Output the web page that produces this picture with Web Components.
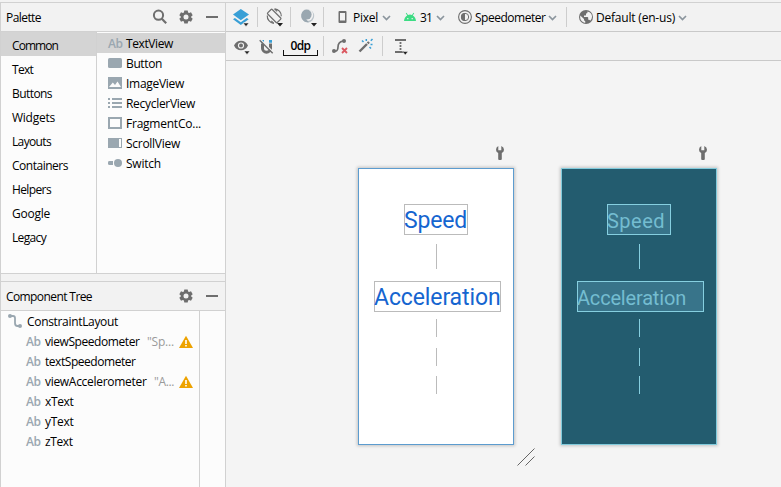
<!DOCTYPE html>
<html lang="en">
<head>
<meta charset="utf-8">
<title>Layout Editor</title>
<style>
html, body { margin: 0; height: 100%; overflow: hidden; }
body { font: 12px/20px "Open Sans", "Noto Sans", sans-serif; color: #000; }
</style>
</head>
<body>
<layout-editor></layout-editor>
<script>
const ICONS = {
  search: [16,16,'<circle cx="6.5" cy="6.2" r="4.6" fill="none" stroke="#6e6e6e" stroke-width="2"/><path d="M9.8 9.8 14.2 14.2" stroke="#6e6e6e" stroke-width="2.2"/>'],
  gear: [16,16,'<path fill="#6e6e6e" fill-rule="evenodd" d="M6.3 1.5h3.4l.4 2 1 .6 1.9-.8 1.7 3-1.5 1.2v1l1.5 1.2-1.7 3-1.9-.7-1 .6-.4 2H6.3l-.4-2-1-.6-1.9.7-1.7-3 1.5-1.2v-1L1.3 6.3l1.7-3 1.9.8 1-.6zM8 5.5a2.5 2.5 0 1 0 0 5 2.5 2.5 0 0 0 0-5z"/>'],
  minus: [12,16,'<path fill="#6e6e6e" d="M0 7h12v2H0z"/>'],
  button: [14,14,'<rect y="2" width="14" height="10" rx="1.6" fill="#9aa7b0"/>'],
  image: [14,14,'<path fill="#9aa7b0" fill-rule="evenodd" d="M0 1h14v12H0zM1 11h12L9.5 5.5 7 9 4.8 6.5z"/>'],
  list: [14,14,'<path fill="#9aa7b0" d="M0 2h2v2H0zM4 2h10v2H4zM0 6h2v2H0zM4 6h10v2H4zM0 10h2v2H0zM4 10h10v2H4z"/>'],
  fragment: [14,14,'<path d="M1 2h12v10H1z" fill="none" stroke="#9aa7b0" stroke-width="2"/>'],
  scroll: [14,14,'<path fill="#9aa7b0" fill-rule="evenodd" d="M0 2h14v10H0zM11 3v8h2V3z"/>'],
  switch: [14,14,'<path d="M1.500 5H5v4H1.500Q0 9 0 7.800V6.200Q0 5 1.500 5z" fill="#9aa7b0"/><circle cx="10" cy="7" r="4" fill="#9aa7b0"/>'],
  constraint: [16,16,'<path d="M3 3h3q2 0 2 2v5q0 3 2.500 3H13" fill="none" stroke="#9aa7b0" stroke-width="1.800"/><circle cx="3" cy="3" r="2" fill="#9aa7b0"/><circle cx="13" cy="13" r="2" fill="#9aa7b0"/>'],
  warn: [14,14,'<path d="M7 .8 14 13H0z" fill="#eda200"/><path d="M6.200 5h1.600v4H6.200zM6.200 10h1.600v1.500H6.200z" fill="#fff"/>'],
  layers: [18,20,'<path d="M1 6.500 8.800 1 17 6.500 8.800 12.300z" fill="#389fd6"/><path d="M1 11.200l1.900-1.300 5.900 4.300 5.900-4.300 2 1.300-7.900 5.700z" fill="#389fd6"/><path d="M11 15h6l-3 3.500z" fill="#222" stroke="#f2f2f2" stroke-width=".6"/>'],
  rotate: [18,20,'<g fill="none" stroke="#6e6e6e" stroke-width="1.200"><rect x="5" y="1.200" width="6.400" height="13.600" rx=".8" transform="rotate(-45 8.200 8)"/><path d="M1.300 7.500A7.200 7.200 0 0 0 7.800 15.300M1.300 7.500M8.600.8A7.200 7.200 0 0 1 15.300 8.200"/><path d="M7.800 15.300 5.300 12.800M8.600.8 11.100 3.300"/></g><path d="M11 15h6l-3 3.500z" fill="#222"/>'],
  moon: [18,20,'<circle cx="7.800" cy="8" r="6.400" fill="#bcc5cb"/><circle cx="7.200" cy="7" r="6" fill="#f2f2f2"/><circle cx="6.600" cy="6.600" r="5" fill="#9aa7b0"/><path d="M2 5A6.400 6.400 0 0 0 9 14.200L6 11z" fill="#9aa7b0"/><path d="M11 15h6l-3 3.500z" fill="#222"/>'],
  phone: [9,14,'<path fill="#6e6e6e" fill-rule="evenodd" d="M1.500 1h6q1 0 1 1v10q0 1-1 1h-6q-1 0-1-1V2q0-1 1-1zM2 3v7.500h5V3z"/>'],
  chev: [9,8,'<path d="M1 2l3.500 3.500L8 2" fill="none" stroke="#8b959d" stroke-width="1.700"/>'],
  android: [12,14,'<path fill="#3ddc84" fill-rule="evenodd" d="M0 11q.3-4 3.200-5.600L1.800 3.200l.7-.4L4 5q2-.8 4 0l1.500-2.200.7.4-1.400 2.200Q11.700 7 12 11zM3.200 8v1.200h1.200V8zM7.600 8v1.200h1.200V8z"/>'],
  contrast: [14,14,'<circle cx="7" cy="7" r="6.400" fill="none" stroke="#6e6e6e" stroke-width="1.100"/><circle cx="7" cy="7" r="3.700" fill="none" stroke="#6e6e6e"/><path d="M7 3a4 4 0 0 0 0 8z" fill="#6e6e6e"/>'],
  globe: [14,14,'<circle cx="7" cy="7" r="7" fill="#6e6e6e"/><path d="M1.200 5.500 5 9.100v1q.2 1 1.200 1v1.800Q2 12.300 1.200 8zM8.500 1.500v.8Q8.400 3.500 7 3.600v1.300q0 .6-.8.700H5V7h3.500q.7 0 .7.800v2h.8q.8 0 1.200 1 3.200-3.600.8-7.200-1.200-1.700-3.500-2.100z" fill="#f2f2f2"/>'],
  eye: [18,20,'<path fill="#6e6e6e" fill-rule="evenodd" d="M1 8.500Q3.200 3.700 8 3.700t7 4.800Q12.800 13.300 8 13.300T1 8.500zM8 5.400a3.100 3.100 0 1 0 0 6.200 3.100 3.100 0 0 0 0-6.200z"/><circle cx="8" cy="8.500" r="2" fill="#6e6e6e"/><path d="M11 14h6l-3 3.500z" fill="#222" stroke="#f2f2f2" stroke-width=".6"/>'],
  magnet: [16,16,'<path d="M3.500 4.500v4.700a4 4 0 0 0 8 0V4.500" fill="none" stroke="#6e6e6e" stroke-width="3"/><path d="M2 1h3v2.700H2zM10 1h3v2.700h-3z" fill="#389fd6"/><path d="M1.800.8 14.500 13.500" stroke="#f2f2f2" stroke-width="1.400"/><path d="M.7 1.200 13.700 14.200" stroke="#6e6e6e" stroke-width="1.400"/>'],
  clear: [18,18,'<path d="M3 13q4 1 4-4t5-6" fill="none" stroke="#6e6e6e" stroke-width="1.700"/><circle cx="3" cy="13" r="2" fill="#6e6e6e"/><circle cx="13" cy="3" r="2" fill="#6e6e6e"/><path d="M11 10l5 5m0-5-5 5" stroke="#db5860" stroke-width="1.800"/>'],
  wand: [16,16,'<path d="M1.500 13.500 9 6" stroke="#6e6e6e" stroke-width="2.400"/><path d="M9.700 5.300 11 4" stroke="#6e6e6e" stroke-width="2.400"/><path d="M4 2.500 5.500 4M8.300 1v2M14.500 1 12.800 2.700M12.500 6.500h2M11.500 9l1.500 1.500" stroke="#389fd6" stroke-width="1.500"/>'],
  guide: [16,20,'<path d="M1 3h11M1 15h9" fill="none" stroke="#6e6e6e" stroke-width="2"/><path d="M6.500 5v9" stroke="#6e6e6e" stroke-width="1.800" stroke-dasharray="2 1"/><path d="M8.500 14.500h5.500L11.300 18z" fill="#222" stroke="#f2f2f2" stroke-width=".5"/>'],
  wrench: [10,16,'<path fill="#6e6e6e" d="M3.300 1v4.300h3V1Q9 2 9 4.800 9 7 6.800 8v6q0 1-1 1H4.200q-1 0-1-1V8Q1 7 1 4.800 1 2 3.300 1z"/>'],
  handle: [18,18,'<path d="M.5 17.500 17.500.5M8.500 17.500 17.500 8.500" stroke="#555" stroke-width=".9"/>']
};

class UiIcon extends HTMLElement {
  connectedCallback() {
    const [w, h, body] = ICONS[this.getAttribute('name')];
    this.attachShadow({ mode: 'open' }).innerHTML =
      `<style>:host{display:block;flex:none;width:${w}px;height:${h}px}svg{display:block}</style>
       <svg width="${w}" height="${h}" viewBox="0 0 ${w} ${h}">${body}</svg>`;
  }
}
customElements.define('ui-icon', UiIcon);

// One line of text, tracked so that it fills the width given in "w".
class UiLabel extends HTMLElement {
  connectedCallback() {
    this.attachShadow({ mode: 'open' }).innerHTML =
      `<style>:host{display:block;flex:none;white-space:pre}span{display:inline-block}</style><span></span>`;
    const span = this.shadowRoot.querySelector('span');
    span.textContent = this.getAttribute('text');
    const w = parseFloat(this.getAttribute('w'));
    if (w) {
      const natural = span.getBoundingClientRect().width;
      span.style.letterSpacing = ((w - natural) / span.textContent.length) + 'px';
      this.style.width = w + 'px';
    }
  }
}
customElements.define('ui-label', UiLabel);

class AbGlyph extends HTMLElement {
  connectedCallback() {
    this.attachShadow({ mode: 'open' }).innerHTML =
      `<style>:host{display:block;flex:none;width:14px;color:#9aa7b0;font:600 12px/19px "Open Sans",sans-serif;align-self:flex-start}</style><ui-label text="Ab" w="14.5"></ui-label>`;
  }
}
customElements.define('ab-glyph', AbGlyph);

class PanelHeader extends HTMLElement {
  connectedCallback() {
    this.attachShadow({ mode: 'open' }).innerHTML =
      `<style>:host{display:flex;align-items:center;box-sizing:border-box;height:29px;padding:0 7px 0 5px;background:#f2f2f2;border-bottom:1px solid #d1d1d1}
       ui-label{padding-top:2px}.tools{display:flex;margin-left:auto;gap:12px}::slotted(*){margin-right:-2px}</style>
       <ui-label text="${this.getAttribute('text')}" w="${this.getAttribute('w')}"></ui-label>
       <div class="tools"><slot></slot><ui-icon name="gear"></ui-icon><ui-icon name="minus"></ui-icon></div>`;
  }
}
customElements.define('panel-header', PanelHeader);

class PaletteCategory extends HTMLElement {
  connectedCallback() {
    this.attachShadow({ mode: 'open' }).innerHTML =
      `<style>:host{display:block;height:24px;padding-left:11px;line-height:27px}:host([selected]){background:#d4d4d4}</style>
       <ui-label text="${this.getAttribute('text')}" w="${this.getAttribute('w')}"></ui-label>`;
  }
}
customElements.define('palette-category', PaletteCategory);

class PaletteItem extends HTMLElement {
  connectedCallback() {
    const icon = this.getAttribute('icon');
    this.attachShadow({ mode: 'open' }).innerHTML =
      `<style>:host{display:flex;align-items:center;height:20px;padding-left:11px;gap:4px;line-height:20px}:host([selected]){background:#d4d4d4}ui-label{padding-top:2px}ab-glyph{margin-top:1px}</style>
       ${icon === 'ab' ? '<ab-glyph></ab-glyph>' : `<ui-icon name="${icon}"></ui-icon>`}
       <ui-label text="${this.getAttribute('text')}" w="${this.getAttribute('w')}"></ui-label>`;
  }
}
customElements.define('palette-item', PaletteItem);

class TreeRow extends HTMLElement {
  connectedCallback() {
    const note = this.getAttribute('note');
    this.attachShadow({ mode: 'open' }).innerHTML =
      `<style>:host{display:flex;align-items:center;height:20px;padding:0 6px 0 25px;gap:5px;line-height:20px}
       .note{color:#9a9a9a;margin-left:auto}</style>
       <ab-glyph></ab-glyph><ui-label text="${this.getAttribute('text')}" w="${this.getAttribute('w')}"></ui-label>
       ${note ? `<ui-label class="note" text='${note}' w="${this.getAttribute('nw')}"></ui-label><ui-icon name="warn"></ui-icon>` : ''}`;
  }
}
customElements.define('tree-row', TreeRow);

class SideBar extends HTMLElement {
  connectedCallback() {
    const cats = [['Common',46],['Text',21],['Buttons',40],['Widgets',43],['Layouts',39],['Containers',56],['Helpers',39],['Google',38],['Legacy',34]];
    const items = [['ab','TextView',47],['button','Button',36],['image','ImageView',58],['list','RecyclerView',69],['fragment','FragmentCo...',75],['scroll','ScrollView',54],['switch','Switch',35]];
    this.attachShadow({ mode: 'open' }).innerHTML =
      `<style>:host{display:grid;grid-template-rows:29px 242px 7px 30px 1fr;box-sizing:border-box;border-left:1px solid #d1d1d1;border-right:1px solid #d1d1d1;background:#fcfcfc}
       .lists{display:grid;grid-template-columns:95px 1fr;border-bottom:1px solid #d1d1d1;box-sizing:border-box}
       .items{border-left:1px solid #d1d1d1;padding-top:1px}
       .gap{background:#f2f2f2}.head{border-top:1px solid #d1d1d1}
       .tree{display:grid;grid-template-columns:199px 1fr}.rows{border-right:1px solid #d1d1d1;padding-top:1px}
       .root{display:flex;align-items:center;height:20px;padding-left:6px;gap:4px}.root ui-icon{margin-top:-2px}</style>
       <panel-header text="Palette" w="35"><ui-icon name="search"></ui-icon></panel-header>
       <div class="lists"><div>${cats.map(([t,w],i)=>`<palette-category text="${t}" w="${w}" ${i?'':'selected'}></palette-category>`).join('')}</div>
       <div class="items">${items.map(([ic,t,w],i)=>`<palette-item icon="${ic}" text="${t}" w="${w}" ${i?'':'selected'}></palette-item>`).join('')}</div></div>
       <div class="gap"></div>
       <div class="head"><panel-header text="Component Tree" w="86"></panel-header></div>
       <div class="tree"><div class="rows"><div class="root"><ui-icon name="constraint"></ui-icon><ui-label text="ConstraintLayout" w="91"></ui-label></div>
       <tree-row text="viewSpeedometer" w="94.500" note='"Sp...' nw="27"></tree-row>
       <tree-row text="textSpeedometer" w="90.500"></tree-row>
       <tree-row text="viewAccelerometer" w="101.500" note='"A...' nw="20"></tree-row>
       <tree-row text="xText" w="28.500"></tree-row><tree-row text="yText" w="28.500"></tree-row><tree-row text="zText" w="27.500"></tree-row></div></div>`;
  }
}
customElements.define('side-bar', SideBar);

class DesignToolbar extends HTMLElement {
  connectedCallback() {
    this.attachShadow({ mode: 'open' }).innerHTML =
      `<style>:host{display:flex;box-sizing:border-box;height:29px;align-items:center;background:#f2f2f2;border-bottom:1px solid #c9c9c9}</style><slot></slot>`;
  }
}
customElements.define('design-toolbar', DesignToolbar);

class ToolSeparator extends HTMLElement {
  connectedCallback() {
    this.attachShadow({ mode: 'open' }).innerHTML = `<style>:host{display:block;flex:none;width:1px;height:20px;background:#cdcdcd}</style>`;
  }
}
customElements.define('tool-separator', ToolSeparator);

class MarginPicker extends HTMLElement {
  connectedCallback() {
    this.attachShadow({ mode: 'open' }).innerHTML =
      `<style>:host{display:flex;flex-direction:column;align-items:center;width:35px;height:16px;font-weight:600}
       ui-label{height:11px;line-height:12px}.rule{box-sizing:border-box;width:35px;height:6px;border:1px solid #111;border-top:0;margin-top:-1px}</style>
       <ui-label text="0dp" w="20"></ui-label><div class="rule"></div>`;
  }
}
customElements.define('margin-picker', MarginPicker);

class DeviceText extends HTMLElement {
  connectedCallback() {
    this.attachShadow({ mode: 'open' }).innerHTML =
      `<style>:host{display:block;position:absolute;box-sizing:border-box;height:31px;border:1px solid #bbb;color:#1565d0;font:23px/32px Roboto,sans-serif}
       ui-label{margin-left:-1px}
       :host([blueprint]){background:#38748a;border:1px solid #86cfe0;color:#74bdd1;font-size:20px;line-height:32px;}
       </style><ui-label text="${this.getAttribute('text')}" w="${this.getAttribute('w')}"></ui-label>`;
  }
}
customElements.define('device-text', DeviceText);

class DevicePreview extends HTMLElement {
  connectedCallback() {
    const bp = this.hasAttribute('blueprint') ? 'blueprint' : '';
    this.attachShadow({ mode: 'open' }).innerHTML =
      `<style>:host{display:block;position:absolute;box-sizing:border-box;width:156px;height:277px;background:#fff;border:1px solid #5c9ccf;box-shadow:0 0 3px 1px rgba(0,0,0,.2)}
       :host([blueprint]){background:#235c6f;border-color:#82cbdc}
       i{position:absolute;left:77px;width:1px;background:#bbb}:host([blueprint]) i{background:#86cfe0}
       ui-icon{position:absolute;left:136px;top:-24px}</style>
       <ui-icon name="wrench"></ui-icon>
       <device-text ${bp} text="Speed" w="${bp?58:63}" style="left:45px;top:35px;width:64px"></device-text>
       <device-text ${bp} text="Acceleration" w="${bp?109:126.500}" style="left:15px;top:112px;width:127px"></device-text>
       <i style="top:75px;height:25px"></i><i style="top:150px;height:18px"></i><i style="top:179px;height:18px"></i><i style="top:207px;height:18px"></i>`;
  }
}
customElements.define('device-preview', DevicePreview);

class LayoutEditor extends HTMLElement {
  connectedCallback() {
    this.attachShadow({ mode: 'open' }).innerHTML =
      `<style>:host{display:grid;grid-template:2px 1fr / 226px 1fr;width:781px;height:487px;background:#f4f4f4;border-top:0}
       .top{grid-column:1/3;background:#f2f2f2}
       side-bar,.main{border-top:1px solid #d1d1d1}
       .main{display:flex;flex-direction:column;min-width:0}
       .canvas{position:relative;flex:1;background:#f4f4f4}
       .chev{margin-top:1px}.grip{position:absolute;left:291px;top:387px}</style>
       <div class="top"></div><side-bar></side-bar>
       <div class="main">
       <design-toolbar>
         <ui-icon name="layers" style="margin:2px 0 0 6px"></ui-icon>
         <tool-separator style="margin-left:7px"></tool-separator>
         <ui-icon name="rotate" style="margin:2px 0 0 8px"></ui-icon>
         <tool-separator style="margin-left:6px"></tool-separator>
         <ui-icon name="moon" style="margin:2px 0 0 9px"></ui-icon>
         <tool-separator style="margin-left:5px"></tool-separator>
         <ui-icon name="phone" style="margin-left:14px"></ui-icon>
         <ui-label text="Pixel" w="25" style="margin:2px 0 0 6px"></ui-label>
         <ui-icon class="chev" name="chev" style="margin-left:4px"></ui-icon>
         <ui-icon name="android" style="margin-left:13px"></ui-icon>
         <ui-label text="31" w="12" style="margin:2px 0 0 4px"></ui-label>
         <ui-icon class="chev" name="chev" style="margin-left:4px"></ui-icon>
         <ui-icon name="contrast" style="margin-left:13px"></ui-icon>
         <ui-label text="Speedometer" w="70.500" style="margin:2px 0 0 3px"></ui-label>
         <ui-icon class="chev" name="chev" style="margin-left:2.500px"></ui-icon>
         <tool-separator style="margin-left:9px"></tool-separator>
         <ui-icon name="globe" style="margin-left:12px"></ui-icon>
         <ui-label text="Default (en-us)" w="79" style="margin:2px 0 0 3px"></ui-label>
         <ui-icon class="chev" name="chev" style="margin-left:3px"></ui-icon>
       </design-toolbar>
       <design-toolbar>
         <ui-icon name="eye" style="margin:2px 0 0 7px"></ui-icon>
         <ui-icon name="magnet" style="margin:2px 0 0 8px"></ui-icon>
         <margin-picker style="margin:3px 0 0 8px"></margin-picker>
         <tool-separator style="margin-left:5px"></tool-separator>
         <ui-icon name="clear" style="margin:2px 0 0 7px"></ui-icon>
         <ui-icon name="wand" style="margin:0 0 0 9px"></ui-icon>
         <tool-separator style="margin-left:8px"></tool-separator>
         <ui-icon name="guide" style="margin:2px 0 0 11px"></ui-icon>
       </design-toolbar>
       <div class="canvas">
         <device-preview style="left:132px;top:107px"></device-preview>
         <device-preview blueprint style="left:335px;top:107px"></device-preview>
         <ui-icon class="grip" name="handle"></ui-icon>
       </div></div>`;
  }
}
customElements.define('layout-editor', LayoutEditor);
</script>
</body>
</html>
